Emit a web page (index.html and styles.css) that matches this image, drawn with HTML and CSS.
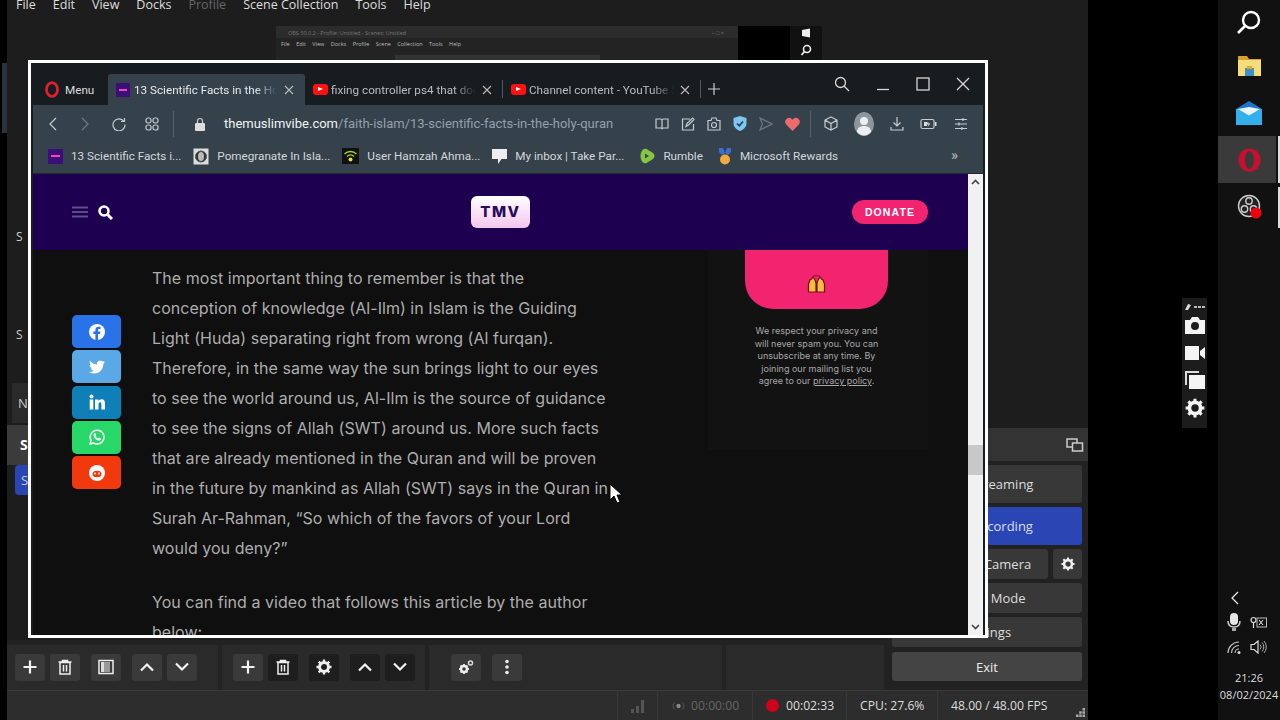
FILE: index.html
```html
<!DOCTYPE html>
<html lang="en">
<head>
  <meta charset="UTF-8" />
  <title>OBS with browser window</title>
  <link rel="stylesheet" href="styles.css">
</head>
<body>
  <div class="desktop">
    <div class="edge-strip"></div>

    <!-- obs window behind the browser -->
    <div class="obs">
      <div class="obs-menu">
        <span>File</span><span>Edit</span><span>View</span><span>Docks</span><span class="dim">Profile</span><span>Scene Collection</span><span>Tools</span><span>Help</span>
      </div>
      <div class="obs-body">
        <div class="obs-left">
          <div class="preview">
            <div class="side-frag">
              <span class="frag-s first">S</span>
              <span class="frag-s second">S</span>
              <span class="frag-n">N</span>
              <span class="frag-active">S</span>
              <span class="frag-blue">S</span>
            </div>
            <div class="capture">
              <div class="capture-win">
                <div class="capture-title">
                  <span>OBS 30.0.2 - Profile: Untitled - Scenes: Untitled</span>
                  <span class="capture-btns">&minus; &#9633; &times;</span>
                </div>
                <div class="capture-menu">File Edit View Docks Profile Scene Collection Tools Help</div>
                <div class="capture-sub"></div>
              </div>
              <div class="capture-black"></div>
              <div class="capture-strip">
                <svg width="10" height="10" viewBox="0 0 10 10"><path fill="#eee" d="M1 2l8-1.500v9L1 8z"/></svg>
                <svg width="12" height="12" viewBox="0 0 12 12"><circle cx="7" cy="5" r="3.500" fill="none" stroke="#eee" stroke-width="1.600"/><path d="M4.500 7.500L1.500 11" stroke="#eee" stroke-width="1.800"/></svg>
              </div>
            </div>
          </div>
          <div class="docks">
            <div class="dock dock-scenes">
              <button class="tool"><svg viewBox="0 0 16 16"><path d="M8 1.500v13M1.500 8h13" class="ln2"/></svg></button>
              <button class="tool"><svg viewBox="0 0 16 16"><path d="M1.500 3h13M5.500 3V1.500h5V3M3 3.500h10V15H3zM6.500 6v6.500M9.500 6v6.500" class="ln1"/></svg></button>
              <button class="tool push"><svg viewBox="0 0 16 16"><rect x="1" y="1.500" width="14" height="13" class="ln1"/><rect x="6" y="3" width="6" height="10" fill="#999"/><rect x="3" y="3" width="3" height="10" fill="#ddd"/></svg></button>
              <button class="tool push"><svg viewBox="0 0 16 16"><path d="M2 11.500l6-6 6 6" class="ln2"/></svg></button>
              <button class="tool"><svg viewBox="0 0 16 16"><path d="M2 4.500l6 6 6-6" class="ln2"/></svg></button>
            </div>
            <div class="dock dock-sources">
              <button class="tool"><svg viewBox="0 0 16 16"><path d="M8 1.500v13M1.500 8h13" class="ln2"/></svg></button>
              <button class="tool off"><svg viewBox="0 0 16 16"><path d="M1.500 3h13M5.500 3V1.500h5V3M3 3.500h10V15H3zM6.500 6v6.500M9.500 6v6.500" class="ln1"/></svg></button>
              <button class="tool off push"><svg viewBox="0 0 16 16"><circle cx="8" cy="8" r="4.500" fill="none" stroke="#eee" stroke-width="3"/><path d="M8 .5v3M8 12.500v3M.5 8h3M12.500 8h3M2.700 2.700l2 2M11.300 11.300l2 2M13.300 2.700l-2 2M4.700 11.300l-2 2" stroke="#eee" stroke-width="2.400"/></svg></button>
              <button class="tool off push"><svg viewBox="0 0 16 16"><path d="M2 11.500l6-6 6 6" class="ln2"/></svg></button>
              <button class="tool off"><svg viewBox="0 0 16 16"><path d="M2 4.500l6 6 6-6" class="ln2"/></svg></button>
            </div>
            <div class="dock dock-mixer">
              <button class="tool"><svg viewBox="0 0 16 16"><circle cx="6" cy="10" r="3" fill="none" stroke="#eee" stroke-width="2.400"/><path d="M6 5v1.500M6 13.500V15M1 10h1.500M9.500 10H11M2.500 6.500l1 1M8.500 12.500l1 1M9.500 6.500l-1 1M3.500 12.500l-1 1" stroke="#eee" stroke-width="1.800"/><circle cx="12.500" cy="4" r="2" fill="none" stroke="#ddd" stroke-width="1.500"/></svg></button>
              <button class="tool push"><svg viewBox="0 0 16 16"><circle cx="8" cy="2.500" r="1.800" fill="#eee"/><circle cx="8" cy="8" r="1.800" fill="#eee"/><circle cx="8" cy="13.500" r="1.800" fill="#eee"/></svg></button>
            </div>
            <div class="dock dock-trans"></div>
          </div>
        </div>
        <div class="controls">
          <div class="controls-head">
            <span>Controls</span>
            <svg width="18" height="14" viewBox="0 0 18 14"><rect x="1" y="1" width="10" height="8" fill="none" stroke="#ccc" stroke-width="1.500"/><rect x="6.500" y="5" width="10" height="8" fill="#333" stroke="#ccc" stroke-width="1.500"/></svg>
          </div>
          <div class="controls-list">
            <button class="ctl tall">Stop Streaming</button>
            <button class="ctl tall blue">Stop Recording</button>
            <div class="ctl-row">
              <button class="ctl">Start Virtual Camera</button>
              <button class="ctl gear"><svg width="14" height="14" viewBox="0 0 16 16"><circle cx="8" cy="8" r="4.500" fill="none" stroke="#eee" stroke-width="3"/><path d="M8 .5v3M8 12.500v3M.5 8h3M12.500 8h3M2.700 2.700l2 2M11.300 11.300l2 2M13.300 2.700l-2 2M4.700 11.300l-2 2" stroke="#eee" stroke-width="2.400"/></svg></button>
            </div>
            <button class="ctl">Studio Mode</button>
            <button class="ctl">Settings</button>
            <button class="ctl exit">Exit</button>
          </div>
        </div>
      </div>
      <div class="status">
        <div class="st st-signal"><svg width="16" height="14" viewBox="0 0 16 14"><path fill="#555" d="M1 10h3v4H1zM6 7h3v7H6zM11 1h3v13h-3z"/></svg></div>
        <div class="st st-live"><svg width="13" height="10" viewBox="0 0 13 10"><circle cx="6.500" cy="5" r="2.200" fill="#888"/><path d="M2.500 1.500a5 5 0 000 7M10.500 1.500a5 5 0 010 7" fill="none" stroke="#555" stroke-width="1"/></svg><span>00:00:00</span></div>
        <div class="st st-rec"><i class="rec-dot"></i><span>00:02:33</span></div>
        <div class="st st-cpu">CPU: 27.6%</div>
        <div class="st st-fps">48.00 / 48.00 FPS</div>
        <svg class="grip" width="9" height="9" viewBox="0 0 9 9"><path fill="#aaa" d="M6.500 0H9v2.500H6.500zM3.200 3.200h2.500v2.500H3.200zM6.500 3.200H9v2.500H6.500zM0 6.500h2.500V9H0zM3.200 6.500h2.500V9H3.200zM6.500 6.500H9V9H6.500z"/></svg>
      </div>
    </div>

    <!-- browser window -->
    <div class="browser">
      <div class="titlebar">
        <div class="menu-btn">
          <svg width="16" height="17" viewBox="0 0 16 17"><ellipse cx="8" cy="8.500" rx="5.500" ry="6.800" fill="none" stroke="#e0212b" stroke-width="2.800"/></svg>
          <span>Menu</span>
        </div>
        <div class="tab active">
          <span class="favicon tmv"></span>
          <span class="tab-text">13 Scientific Facts in the Holy Quran</span>
          <svg class="x" viewBox="0 0 10 10"><path d="M1 1l8 8M9 1l-8 8"/></svg>
        </div>
        <div class="tab">
          <span class="favicon yt"></span>
          <span class="tab-text">fixing controller ps4 that does not</span>
          <svg class="x" viewBox="0 0 10 10"><path d="M1 1l8 8M9 1l-8 8"/></svg>
        </div>
        <i class="tab-sep"></i>
        <div class="tab">
          <span class="favicon yt"></span>
          <span class="tab-text">Channel content - YouTube Studio</span>
          <svg class="x" viewBox="0 0 10 10"><path d="M1 1l8 8M9 1l-8 8"/></svg>
        </div>
        <i class="tab-sep"></i>
        <svg class="new-tab" width="12" height="12" viewBox="0 0 12 12"><path d="M6 0v12M0 6h12" stroke="#ccc" stroke-width="1.200"/></svg>
        <div class="win-btns">
          <svg width="16" height="16" viewBox="0 0 16 16"><circle cx="6.500" cy="6.500" r="5" class="ln-win"/><path d="M10 10l5 5" class="ln-win"/></svg>
          <svg width="14" height="14" viewBox="0 0 14 14"><path d="M1 12.500h12" class="ln-win"/></svg>
          <svg width="14" height="14" viewBox="0 0 14 14"><rect x="1" y="1" width="12" height="12" class="ln-win"/></svg>
          <svg width="14" height="14" viewBox="0 0 14 14"><path d="M1 1l12 12M13 1L1 13" class="ln-win"/></svg>
        </div>
      </div>

      <div class="toolbar">
        <svg class="tb-back" width="10" height="14" viewBox="0 0 10 14"><path d="M8 1L2 7l6 6" class="ln-tb"/></svg>
        <svg class="tb-fwd" width="10" height="14" viewBox="0 0 10 14"><path d="M2 1l6 6-6 6" class="ln-tb faded"/></svg>
        <svg class="tb-reload" width="14" height="14" viewBox="0 0 14 14"><path d="M12 4.500A6 6 0 1013 7.500M12.500 1v3.500H9" class="ln-tb"/></svg>
        <svg class="tb-dial" width="14" height="14" viewBox="0 0 14 14"><rect x="1" y="1" width="5" height="5" rx="2" class="ln-tb"/><rect x="8" y="1" width="5" height="5" rx="2" class="ln-tb"/><rect x="1" y="8" width="5" height="5" rx="2" class="ln-tb"/><rect x="8" y="8" width="5" height="5" rx="2" class="ln-tb"/></svg>
        <i class="tb-sep"></i>
        <svg class="tb-lock" width="12" height="14" viewBox="0 0 12 14"><path d="M3.500 6V4a2.500 2.500 0 015 0v2" class="ln-tb"/><rect x="1" y="6" width="10" height="8" rx="1" fill="#ddd"/></svg>
        <div class="url"><b>themuslimvibe.com</b>/faith-islam/13-scientific-facts-in-the-holy-quran</div>
        <div class="tb-right">
          <div class="tb-group">
            <svg width="14" height="14" viewBox="0 0 14 14"><path d="M1 2h4.500A1.500 1.500 0 017 3.500V12a1.500 1.500 0 00-1.500-1H1zM13 2H8.500A1.500 1.500 0 007 3.500V12a1.500 1.500 0 011.500-1H13z" class="ln-tb"/></svg>
            <svg width="14" height="14" viewBox="0 0 14 14"><path d="M9 2H1.500v11h11V7M5 9.500l1-3L11.500 1 13 2.500 7.500 8z" class="ln-tb"/></svg>
            <svg width="14" height="14" viewBox="0 0 14 14"><path d="M1 3.500h3L5 1h4l1 2.500h3V13H1z" class="ln-tb"/><circle cx="7" cy="8" r="2.500" class="ln-tb"/></svg>
            <svg width="14" height="15" viewBox="0 0 14 15"><path fill="#7cc7f0" d="M7 0l6.500 2v5.500C13.500 11 10.500 13.800 7 15 3.500 13.800.5 11 .5 7.500V2z"/><path d="M4 7.500l2.300 2.300L10 5.500" fill="none" stroke="#2e3a44" stroke-width="1.600"/></svg>
            <svg width="14" height="14" viewBox="0 0 14 14"><path d="M1 1l12 6-12 6 2.500-6z" class="ln-tb faded"/></svg>
            <svg width="15" height="14" viewBox="0 0 15 14"><path fill="#ee6a6f" d="M7.500 14L1.200 7.400A3.900 3.900 0 016.800 2l.7.800.7-.8a3.900 3.900 0 015.600 5.400z"/></svg>
          </div>
          <i class="tb-sep"></i>
          <div class="tb-group wide">
            <svg width="14" height="15" viewBox="0 0 14 15"><path d="M7 1l6 3v7l-6 3-6-3V4zM1 4l6 3.500L13 4M7 7.500V14" class="ln-tb"/></svg>
            <svg class="avatar" width="20" height="24" viewBox="0 0 20 24"><ellipse cx="10" cy="12" rx="10" ry="12" fill="#8c969e"/><circle cx="10" cy="9" r="4" fill="#eee"/><path fill="#eee" d="M3 20c0-4 3-6 7-6s7 2 7 6a10 12 0 01-14 0z"/></svg>
            <svg width="14" height="14" viewBox="0 0 14 14"><path d="M7 0v9M3.500 5.500L7 9l3.500-3.500M1 10v3h12v-3" class="ln-tb"/></svg>
            <svg width="18" height="12" viewBox="0 0 18 12"><rect x="1" y="1.500" width="13" height="9" rx="1.500" class="ln-tb"/><path fill="#ddd" d="M15 4h1.500v4H15zM4 4h3v4H4zM8 3.500L6.500 6.500h2L7.500 9l3-3.500H8.500z"/></svg>
            <svg width="14" height="14" viewBox="0 0 14 14"><path d="M1 2.500h12M1 7h12M1 11.500h12" class="ln-tb"/><path d="M9 1v3M5 5.500v3M8 10v3" class="ln-tb"/></svg>
          </div>
        </div>
      </div>

      <div class="bookmarks">
        <a class="bm"><span class="favicon tmv big"></span>13 Scientific Facts i...</a>
        <a class="bm"><svg width="16" height="17" viewBox="0 0 16 17"><rect x=".5" y=".5" width="15" height="16" fill="#ddd"/><circle cx="8" cy="8.500" r="5.500" fill="#333" stroke="#555"/><ellipse cx="8" cy="8.500" rx="3" ry="4.500" fill="#bbb"/></svg>Pomegranate In Isla...</a>
        <a class="bm"><svg width="17" height="16" viewBox="0 0 17 16"><rect width="17" height="16" fill="#111"/><path d="M2.500 6a8.500 8.500 0 0112 0M5 8.500a5 5 0 017 0" fill="none" stroke="#a8d62e" stroke-width="1.400"/><circle cx="8.500" cy="11.500" r="2" fill="#e6e040"/></svg>User Hamzah Ahma...</a>
        <a class="bm wider"><svg width="15" height="15" viewBox="0 0 15 15"><path fill="#eee" d="M0 0h15v10H9.500L6 15v-5H0z"/></svg>My inbox | Take Par...</a>
        <a class="bm wider"><svg width="16" height="16" viewBox="0 0 16 16"><path fill="#85c742" d="M4 1.500c1-1 2.500-1 3.500-.4l6.500 4c2 1.300 2 4.500 0 5.800l-6.500 4c-1 .6-2.500.6-3.500-.4C2.500 13 1.500 11 1.500 8S2.500 3 4 1.500z"/><path fill="#3a4650" d="M6 5.500v5l4-2.500z"/></svg>Rumble</a>
        <a class="bm"><svg width="14" height="17" viewBox="0 0 14 17"><path fill="#3d6fd1" d="M1 0h4l2 5-3 2-3-3zM13 0H9L7 5l3 2 3-3z"/><circle cx="7" cy="11.500" r="5" fill="#f3a93c"/></svg>Microsoft Rewards</a>
        <span class="bm-more">&raquo;</span>
      </div>

      <div class="page">
        <div class="page-main">
          <header class="site-head">
            <div class="head-left">
              <svg width="16" height="12" viewBox="0 0 16 12"><path d="M0 1.500h16M0 6h16M0 10.500h16" stroke="#5f4b87" stroke-width="2.200"/></svg>
              <svg width="15" height="15" viewBox="0 0 15 15"><circle cx="6" cy="6" r="4.500" fill="none" stroke="#fff" stroke-width="2.600"/><path d="M9.500 9.500l4.500 4.500" stroke="#fff" stroke-width="3"/></svg>
            </div>
            <div class="logo">TMV</div>
            <a class="donate">DONATE</a>
          </header>
          <div class="content">
            <div class="share">
              <a class="sh fb"><svg viewBox="0 0 16 16"><circle cx="8" cy="8" r="8" fill="#fff"/><path fill="#2a72e8" d="M9 16v-6h2l.4-2.400H9V6.200c0-.8.3-1.200 1.300-1.200h1.200V3c-.5-.1-1.200-.2-1.900-.2-2 0-3.200 1.100-3.200 3.200v1.600H4.400V10h2v6z"/></svg></a>
              <a class="sh tw"><svg viewBox="0 0 24 24"><path fill="#fff" d="M23.953 4.570a10 10 0 01-2.825.775 4.958 4.958 0 002.163-2.723c-.951.555-2.005.959-3.127 1.184a4.920 4.920 0 00-8.384 4.482C7.690 8.095 4.067 6.130 1.640 3.162a4.822 4.822 0 00-.666 2.475c0 1.710.870 3.213 2.188 4.096a4.904 4.904 0 01-2.228-.616v.060a4.923 4.923 0 003.946 4.827 4.996 4.996 0 01-2.212.085 4.936 4.936 0 004.604 3.417 9.867 9.867 0 01-6.102 2.105c-.390 0-.779-.023-1.170-.067a13.995 13.995 0 007.557 2.209c9.053 0 13.998-7.496 13.998-13.985 0-.210 0-.420-.015-.630A9.935 9.935 0 0024 4.590z"/></svg></a>
              <a class="sh li"><svg viewBox="0 0 16 16"><circle cx="2.500" cy="2.500" r="2" fill="#fff"/><rect x=".7" y="5.500" width="3.600" height="10" fill="#fff"/><path fill="#fff" d="M6 5.500h3.400v1.400C10 6 11.200 5.200 12.600 5.200c2.600 0 3.400 1.700 3.400 4.300v6h-3.600v-5.300c0-1.200-.3-2-1.400-2s-1.500.9-1.500 2v5.300H6z"/></svg></a>
              <a class="sh wa"><svg viewBox="0 0 16 16"><path d="M1 15l1-3.700A6.900 6.900 0 118 15a7 7 0 01-3.300-.9z" fill="none" stroke="#fff" stroke-width="1.500"/><path fill="#fff" d="M5.600 4.200c-.9.500-1.300 1.600-.9 2.800.7 2 2.300 3.700 4.300 4.400 1.200.4 2.400 0 2.800-1l.1-.9-1.900-1-.8 1c-1.200-.4-2.300-1.500-2.800-2.700l.8-.8-.8-1.900z"/></svg></a>
              <a class="sh rd"><svg viewBox="0 0 16 16"><circle cx="8" cy="8" r="8" fill="#fff"/><ellipse cx="8" cy="9" rx="4.500" ry="3.200" fill="#f2390d"/><circle cx="6" cy="8.500" r="1" fill="#fff"/><circle cx="10" cy="8.500" r="1" fill="#fff"/></svg></a>
            </div>
            <article class="article">
              <p>The most important thing to remember is that the conception of knowledge (Al-Ilm) in Islam is the Guiding Light (Huda) separating right from wrong (Al furqan). Therefore, in the same way the sun brings light to our eyes to see the world around us, Al-Ilm is the source of guidance to see the signs of Allah (SWT) around us. More such facts that are already mentioned in the Quran and will be proven in the future by mankind as Allah (SWT) says in the Quran in Surah Ar-Rahman, &ldquo;So which of the favors of your Lord would you deny?&rdquo;</p>
              <p>You can find a video that follows this article by the author below:</p>
            </article>
            <aside class="signup">
              <div class="signup-btn">
                <svg width="19" height="18" viewBox="0 0 19 18"><path fill="#f6bd3f" stroke="#6a1414" stroke-width="1.200" d="M1.500 17V9L3 5l1.500-1L6 2l2 3 1 3v9zM17.500 17V9L16 5l-1.500-1L13 2l-2 3-1 3v9z"/><path d="M6 1.500c1-1.200 6-1.200 7 0" fill="none" stroke="#7a1a20"/></svg>
              </div>
              <p class="signup-note">We respect your privacy and will never spam you. You can unsubscribe at any time. By joining our mailing list you agree to our <u>privacy policy</u>.</p>
            </aside>
          </div>
        </div>
        <div class="scrollbar">
          <svg width="9" height="6" viewBox="0 0 9 6"><path d="M1 5l3.500-3.500L8 5" fill="none" stroke="#444" stroke-width="1.600"/></svg>
          <div class="thumb"></div>
          <svg width="9" height="6" viewBox="0 0 9 6"><path d="M1 1l3.500 3.500L8 1" fill="none" stroke="#444" stroke-width="1.600"/></svg>
        </div>
      </div>
    </div>

    <!-- floating recorder toolbar -->
    <div class="rec-tools">
      <svg class="rt-top" width="22" height="8" viewBox="0 0 22 8"><path d="M1 7l3-6 3 1-3 5z" fill="#ddd"/><path d="M10 3h3v2h-3zM14 3h3v2h-3zM18 3h3v2h-3z" fill="#bbb"/></svg>
      <svg class="rt-cam" width="20" height="17" viewBox="0 0 20 17"><path fill="#f4f4f4" fill-rule="evenodd" d="M0 3h5l2-3h6l2 3h5v14H0zM10 5a4 4 0 100 8 4 4 0 000-8z"/></svg>
      <svg class="rt-vid" width="20" height="14" viewBox="0 0 20 14"><path fill="#f4f4f4" d="M0 0h14v14H0zM15 5l5-4v12l-5-4z"/></svg>
      <svg width="20" height="18" viewBox="0 0 20 18"><path fill="#ddd" d="M0 0h14v2H2v12H0z"/><rect x="4" y="4" width="16" height="14" fill="#f4f4f4"/></svg>
      <svg width="20" height="20" viewBox="0 0 16 16"><circle cx="8" cy="8" r="4.500" fill="none" stroke="#f4f4f4" stroke-width="3"/><path d="M8 .5v3M8 12.500v3M.5 8h3M12.500 8h3M2.700 2.700l2 2M11.300 11.300l2 2M13.300 2.700l-2 2M4.700 11.300l-2 2" stroke="#f4f4f4" stroke-width="2.400"/></svg>
    </div>

    <!-- windows taskbar on the right -->
    <div class="taskbar">
      <div class="task t-search">
        <svg width="26" height="26" viewBox="0 0 26 26"><circle cx="15" cy="11" r="8" fill="none" stroke="#fff" stroke-width="2.400"/><path d="M9 17l-7 7" stroke="#fff" stroke-width="2.600"/></svg>
      </div>
      <div class="task t-folder">
        <svg width="23" height="20" viewBox="0 0 23 20"><path fill="#d9a02a" d="M0 0h9l2 3h12v4H0z"/><path fill="#f7dc7a" d="M0 4h23v16H0z"/><path fill="#3f8fc7" d="M7 12h9v8H7z"/><path fill="#e0a92c" d="M9 10h5v3H9z"/></svg>
      </div>
      <div class="task t-mail">
        <svg width="26" height="24" viewBox="0 0 26 24"><path fill="#1a77c9" d="M13 0l13 8v3H0V8z"/><path fill="#33b0ec" d="M0 8h26v16H0z"/><path fill="#eaf5fc" d="M2 8l11 6.500L24 8l-11-2z"/></svg>
      </div>
      <div class="task current">
        <svg width="23" height="24" viewBox="0 0 23 24"><ellipse cx="11.500" cy="12" rx="11" ry="11.500" fill="#c8102e"/><ellipse cx="11.500" cy="12" rx="4.500" ry="9" fill="#3a3a3a"/></svg>
      </div>
      <div class="task running">
        <svg width="26" height="26" viewBox="0 0 26 26"><circle cx="12" cy="12" r="10.500" fill="#222" stroke="#ccc" stroke-width="1.400"/><circle cx="12" cy="7" r="3.200" fill="none" stroke="#ccc" stroke-width="1.400"/><circle cx="7.500" cy="15" r="3.200" fill="none" stroke="#ccc" stroke-width="1.400"/><circle cx="16.500" cy="15" r="3.200" fill="none" stroke="#ccc" stroke-width="1.400"/><circle cx="19" cy="19" r="5.500" fill="#f00010"/></svg>
      </div>
      <div class="tray">
        <svg class="tray-chev" width="10" height="14" viewBox="0 0 10 14"><path d="M8 1L2 7l6 6" fill="none" stroke="#eee" stroke-width="1.200"/></svg>
        <div class="tray-grid">
          <svg width="14" height="18" viewBox="0 0 14 18"><rect x="3" y="0" width="8" height="12" rx="4" fill="#e6e6e6"/><path d="M1 8c0 4 2 6 6 6s6-2 6-6" fill="none" stroke="#ccc" stroke-width="1.500"/><path d="M5 15h4v3H5z" fill="#aaa"/></svg>
          <svg width="17" height="13" viewBox="0 0 17 13"><circle cx="3.500" cy="4" r="2.500" fill="none" stroke="#ddd" stroke-width="1.200"/><path d="M3.500 6.500V12" stroke="#ddd" stroke-width="1.200"/><rect x="7" y="2" width="9.500" height="9" fill="none" stroke="#bbb"/><path d="M9 4l4 5M13 4L9 9" stroke="#eee"/></svg>
          <svg width="15" height="14" viewBox="0 0 15 14"><path d="M1 13A11 11 0 0112 2M4.500 13A7.500 7.500 0 0112 5.500M8 13a4 4 0 014-4" fill="none" stroke="#bbb" stroke-width="1.200"/><circle cx="12" cy="12.500" r="1.500" fill="#ddd"/></svg>
          <svg width="17" height="14" viewBox="0 0 17 14"><path d="M1 4.500h3L8 1v12L4 9.500H1z" fill="none" stroke="#ddd" stroke-width="1.200"/><path d="M10 4.500a3.500 3.500 0 010 5M12 2.500a6.500 6.500 0 010 9M14 1a9 9 0 010 12" fill="none" stroke="#aaa"/></svg>
        </div>
        <div class="clock">21:26<br>08/02/2024</div>
      </div>
    </div>

    <svg class="cursor" width="14" height="21" viewBox="0 0 14 21"><path fill="#fff" stroke="#000" d="M1 1v16l4-4 3 7 3-1-3-7h5z"/></svg>
  </div>
</body>
</html>
```

FILE: styles.css
```css
* {
  box-sizing: border-box;
}

body {
  margin: 0;
  background: #000;
  font-family: "Open Sans", "Noto Sans", sans-serif;
  overflow: hidden;
}

button {
  font: inherit;
  border: none;
  padding: 0;
}

.desktop {
  position: relative;
  width: 1280px;
  height: 720px;
  overflow: hidden;
  background: #000;
}

.edge-strip {
  position: absolute;
  left: 2px;
  top: 63px;
  width: 5px;
  height: 70px;
  background: #2a343b;
}

/* svg line helpers */
.ln1 { fill: none; stroke: #eee; stroke-width: 1.500; }
.ln2 { fill: none; stroke: #f2f2f2; stroke-width: 2.200; }
.ln-win { fill: none; stroke: #d8d8d8; stroke-width: 1.300; }
.ln-tb { fill: none; stroke: #c6ccd0; stroke-width: 1.200; }
.ln-tb.faded { stroke: #6d7a84; }

/* ---- obs ---- */
.obs {
  position: absolute;
  left: 7px;
  top: 0;
  width: 1081px;
  height: 720px;
  background: #1d1d1d;
  display: flex;
  flex-direction: column;
  color: #ddd;
}

.obs-menu {
  height: 12px;
  display: flex;
  gap: 17px;
  padding-left: 9px;
  font-size: 12.500px;
  line-height: 10px;
  color: #ddd;
  overflow: hidden;
}

.obs-menu .dim {
  color: #666;
}

.obs-body {
  flex: 1;
  display: flex;
  min-height: 0;
}

.obs-left {
  width: 880px;
  display: flex;
  flex-direction: column;
}

.preview {
  flex: 1;
  display: flex;
  min-height: 0;
  overflow: hidden;
}

.side-frag {
  width: 21px;
  margin-right: 248px;
  display: flex;
  flex-direction: column;
  font-size: 12px;
  color: #ccc;
}

.frag-s {
  padding-left: 9px;
  line-height: 16px;
}
.frag-s.first { margin-top: 217px; }
.frag-s.second { margin-top: 82px; }

.frag-n {
  margin: 40px 0 0 5px;
  height: 40px;
  background: #2a2a2a;
  padding-left: 6px;
  line-height: 40px;
  font-size: 13px;
}

.frag-active {
  margin-top: 2px;
  height: 40px;
  background: #3b3b3b;
  padding-left: 13px;
  line-height: 40px;
  font-weight: 700;
  color: #fff;
  font-size: 14px;
}

.frag-blue {
  margin-left: 8px;
  height: 30px;
  background: #2a46b5;
  padding-left: 6px;
  line-height: 30px;
  border-radius: 4px 0 0 4px;
  font-size: 13px;
}

.capture {
  margin-top: 14px;
  display: flex;
  height: 60px;
}

.capture-win {
  width: 462px;
  background: #232323;
  color: #aaa;
  font-size: 5.500px;
}

.capture-title {
  display: flex;
  justify-content: space-between;
  height: 12px;
  padding: 3px 14px 0 12px;
  color: #777;
  background: #2c2c2c;
}

.capture-menu {
  padding: 2px 5px 0;
  height: 17px;
  color: #bbb;
  word-spacing: 5px;
}

.capture-sub {
  margin-left: 119px;
  width: 205px;
  height: 5px;
  background: #333;
}

.capture-black {
  width: 52px;
  background: #000;
}

.capture-strip {
  width: 32px;
  background: #111;
  display: flex;
  flex-direction: column;
  align-items: center;
  gap: 6px;
  padding-top: 2px;
}

.docks {
  height: 50px;
  display: flex;
  gap: 4px;
  background: #222;
  padding-top: 5px;
}

.dock {
  background: #2a2a2a;
  display: flex;
  align-items: center;
  gap: 5px;
  padding: 8px 0 9px 8px;
}
.dock-scenes { width: 211px; }
.dock-sources { width: 203px; padding-left: 11px; }
.dock-mixer { width: 293px; padding-left: 22px; }
.dock-trans { width: 158px; }

.tool {
  width: 30px;
  height: 27px;
  background: #3a3a3a;
  border-radius: 3px;
  display: flex;
  align-items: center;
  justify-content: center;
}
.tool svg {
  width: 16px;
  height: 16px;
}
.tool.off {
  background: #1e1e1e;
}
.tool.push {
  margin-left: 6px;
}

.controls {
  width: 201px;
  display: flex;
  flex-direction: column;
  justify-content: flex-end;
  padding-bottom: 9px;
  background: #222;
  margin-top: 416px;
}

.controls-head {
  height: 33px;
  background: #333;
  display: flex;
  justify-content: space-between;
  align-items: center;
  padding: 0 4px 0 40px;
  font-size: 13px;
  margin-bottom: 4px;
}

.controls-list {
  display: flex;
  flex-direction: column;
  gap: 4px;
  padding-left: 5px;
  width: 195px;
}

.ctl {
  width: 190px;
  height: 30px;
  background: #383838;
  color: #ddd;
  font-size: 13px;
  text-align: center;
  border-radius: 3px;
}
.ctl.tall { height: 38px; }
.ctl.blue { background: #2a46b5; color: #dde; }
.ctl.exit { background: #444; color: #eee; height: 29px; margin-top: 1px; }

.ctl-row {
  display: flex;
  gap: 5px;
}
.ctl-row .ctl { width: 156px; }
.ctl-row .gear {
  width: 29px;
  display: flex;
  align-items: center;
  justify-content: center;
}

.status {
  position: relative;
  height: 30px;
  background: #2d2d2d;
  border-top: 1px solid #3a3a3a;
  display: flex;
  font-size: 12.200px;
  color: #ddd;
  padding-left: 610px;
}

.st {
  display: flex;
  align-items: center;
  height: 100%;
  border-right: 1px solid #383838;
}
.st-signal { width: 41px; justify-content: center; border-left: 1px solid #383838; }
.st-live { width: 95px; padding-left: 14px; gap: 6px; color: #666; }
.st-rec { width: 94px; padding-left: 13px; gap: 7px; }
.st-cpu { width: 91px; padding-left: 13px; }
.st-fps { padding-left: 13px; border-right: none; }

.rec-dot {
  width: 13px;
  height: 13px;
  border-radius: 50%;
  background: #d0021b;
}

.grip {
  position: absolute;
  right: 3px;
  bottom: 3px;
}

/* ---- browser ---- */
.browser {
  position: absolute;
  left: 28px;
  top: 60px;
  width: 960px;
  height: 578px;
  border: 3px solid #fff;
  background: #171c20;
  display: flex;
  flex-direction: column;
  font-family: Roboto, "Open Sans", sans-serif;
}

.titlebar {
  height: 42px;
  flex: none;
  display: flex;
  align-items: flex-end;
  padding-left: 13px;
  color: #ddd;
  font-size: 11.700px;
  position: relative;
}

.menu-btn {
  display: flex;
  align-items: center;
  gap: 5px;
  height: 31px;
  width: 64px;
}

.tab {
  width: 197px;
  height: 31px;
  display: flex;
  align-items: center;
  padding: 0 10px 0 8px;
  gap: 3px;
  color: #b8bec3;
  white-space: nowrap;
}
.tab.active {
  background: #35424c;
  color: #e6e8ea;
  border-radius: 3px 3px 0 0;
  padding-right: 11px;
  gap: 4px;
}

.tab-text {
  flex: 1;
  overflow: hidden;
  -webkit-mask-image: linear-gradient(to right, #000 85%, transparent 100%);
  mask-image: linear-gradient(to right, #000 85%, transparent 100%);
}

.favicon {
  flex: none;
  display: inline-block;
  width: 14px;
  height: 14px;
}
.favicon.tmv {
  background: #3b0f7a;
  position: relative;
}
.favicon.tmv::after {
  content: "";
  position: absolute;
  left: 3px;
  right: 3px;
  top: 6px;
  height: 2px;
  background: #f4a;
}
.favicon.tmv.big {
  width: 15px;
  height: 15px;
}
.favicon.yt {
  width: 15px;
  height: 11px;
  border-radius: 3px;
  background: #f11;
  position: relative;
}
.favicon.yt::after {
  content: "";
  position: absolute;
  left: 5px;
  top: 3px;
  border-left: 5px solid #fff;
  border-top: 2.500px solid transparent;
  border-bottom: 2.500px solid transparent;
}

.x {
  flex: none;
  width: 10px;
  height: 10px;
  margin-left: 3px;
  stroke: #bbb;
  stroke-width: 1.100;
}

.tab-sep {
  width: 1px;
  height: 18px;
  background: #556;
  margin-bottom: 7px;
}

.new-tab {
  margin: 0 0 10px 7px;
}

.win-btns {
  position: absolute;
  right: 15px;
  top: 13px;
  display: flex;
  gap: 26px;
  align-items: center;
}

.toolbar {
  height: 37px;
  flex: none;
  margin: 0 2px;
  background: #35424c;
  display: flex;
  align-items: center;
  padding-left: 15px;
}

.tb-fwd { margin-left: 22px; }
.tb-reload { margin-left: 22px; }
.tb-dial { margin-left: 19px; }

.tb-sep {
  width: 1px;
  height: 26px;
  background: #55626c;
  margin-left: 14px;
}

.tb-lock { margin-left: 20px; }

.url {
  margin-left: 18px;
  font-size: 13px;
  color: #94a0a9;
  white-space: nowrap;
}
.url b {
  font-weight: 400;
  color: #f0f2f3;
}

.tb-right {
  margin-left: auto;
  padding-right: 15px;
  display: flex;
  align-items: center;
}
.tb-right .tb-sep {
  margin: 0 13px 0 10px;
}

.tb-group {
  display: flex;
  align-items: center;
  gap: 12px;
}
.tb-group.wide {
  gap: 16px;
}

.bookmarks {
  height: 32px;
  flex: none;
  margin: 0 2px;
  background: #35424c;
  display: flex;
  align-items: center;
  padding: 0 0 3px 15px;
  font-size: 11.700px;
  color: #d4d8db;
  border-bottom: 1px solid #232b31;
  position: relative;
}

.bm {
  display: flex;
  align-items: center;
  gap: 8px;
  margin-right: 12px;
  white-space: nowrap;
}
.bm.wider {
  margin-right: 15px;
}

.bm-more {
  position: absolute;
  right: 25px;
  top: 4px;
  font-size: 15px;
  color: #bbb;
}

.page {
  flex: 1;
  margin: 0 2px;
  display: flex;
  min-height: 0;
  background: #0f0f0f;
}

.page-main {
  flex: 1;
  display: flex;
  flex-direction: column;
  min-width: 0;
  overflow: hidden;
}

.site-head {
  height: 76px;
  flex: none;
  background: #1e0050;
  display: flex;
  align-items: center;
  padding: 0 40px 0 39px;
  position: relative;
}

.head-left {
  display: flex;
  align-items: center;
  gap: 10px;
}

.logo {
  margin-left: 358px;
  width: 59px;
  height: 32px;
  border-radius: 6px;
  background: linear-gradient(to bottom, #fff, #f3c6ee);
  color: #2a0a5c;
  font: 800 15px Inter, sans-serif;
  letter-spacing: 1.500px;
  text-align: center;
  line-height: 32px;
}

.donate {
  margin-left: auto;
  width: 76px;
  height: 24px;
  border-radius: 12px;
  background: #f2246f;
  color: #fff;
  font: 700 10.500px/24px "Liberation Sans", sans-serif;
  letter-spacing: 1.100px;
  text-align: center;
}

.content {
  flex: 1;
  display: flex;
  min-height: 0;
  padding-left: 39px;
  overflow: hidden;
}

.share {
  width: 49px;
  flex: none;
  margin-top: 65px;
  display: flex;
  flex-direction: column;
  gap: 2.300px;
}

.sh {
  height: 33px;
  border-radius: 5px;
  display: flex;
  align-items: center;
  justify-content: center;
}
.sh svg {
  width: 16px;
  height: 16px;
}
.fb { background: #2a72e8; }
.tw { background: #5aa9e6; }
.li { background: #0f7fb8; }
.wa { background: #27d768; }
.rd { background: #f2390d; }

.article {
  width: 457px;
  flex: none;
  margin-left: 31px;
  padding-top: 13px;
  font: 400 16px/30px Inter, sans-serif;
  letter-spacing: .04px;
  color: #adadad;
}
.article p {
  margin: 0 0 24px;
}

.signup {
  width: 220px;
  flex: none;
  margin-left: 99px;
  padding-right: 3px;
  height: 200px;
  background: #121212;
  display: flex;
  flex-direction: column;
  align-items: center;
}

.signup-btn {
  width: 143px;
  height: 59px;
  background: #f2246f;
  border-radius: 0 0 28px 28px;
  display: flex;
  align-items: center;
  justify-content: center;
  padding-top: 9px;
}

.signup-note {
  width: 130px;
  margin: 16px 0 0;
  font: 400 9px/12.500px Inter, sans-serif;
  color: #a8a8a8;
  text-align: center;
}

.scrollbar {
  width: 15px;
  flex: none;
  background: #f1f1f1;
  position: relative;
  display: flex;
  flex-direction: column;
  align-items: center;
  justify-content: space-between;
  padding: 5px 0;
}

.thumb {
  position: absolute;
  left: 0;
  right: 0;
  top: 271px;
  height: 30px;
  background: #c8c8c8;
}

/* ---- floating toolbar + taskbar ---- */
.rec-tools {
  position: absolute;
  left: 1182px;
  top: 298px;
  width: 25px;
  height: 130px;
  background: #1c1c1c;
  display: flex;
  flex-direction: column;
  align-items: center;
  gap: 9px;
  padding-top: 5px;
}
.rt-top { margin-bottom: -3px; }
.rt-cam { margin-bottom: 3px; }
.rt-vid { margin-bottom: 2px; }

.taskbar {
  position: absolute;
  left: 1218px;
  top: 0;
  width: 62px;
  height: 720px;
  background: #111;
  display: flex;
  flex-direction: column;
}

.task {
  display: flex;
  align-items: center;
  justify-content: center;
  position: relative;
  height: 47px;
}
.t-search { height: 43px; }
.t-folder { height: 46px; }

.task.current {
  background: #3a3a3a;
  border-right: 4px solid #111;
  padding-left: 5px;
}
.task.running {
  padding-left: 2px;
}
.task.current::after,
.task.running::after {
  content: "";
  position: absolute;
  right: -4px;
  top: 0;
  bottom: 0;
  width: 2px;
  background: #ddd;
}
.task.running::after {
  right: 0;
  top: 4px;
  bottom: 2px;
}

.tray {
  margin-top: auto;
  padding-bottom: 17px;
  display: flex;
  flex-direction: column;
  color: #ddd;
}

.tray-chev {
  margin-left: 12px;
}

.tray-grid {
  margin-top: 8px;
  display: grid;
  grid-template-columns: 24px 24px;
  row-gap: 9px;
  justify-items: center;
  align-items: center;
  padding-left: 4px;
}

.clock {
  margin-top: 15px;
  font-size: 11px;
  line-height: 17px;
  text-align: center;
  white-space: nowrap;
}

.cursor {
  position: absolute;
  left: 609px;
  top: 483px;
}
```
